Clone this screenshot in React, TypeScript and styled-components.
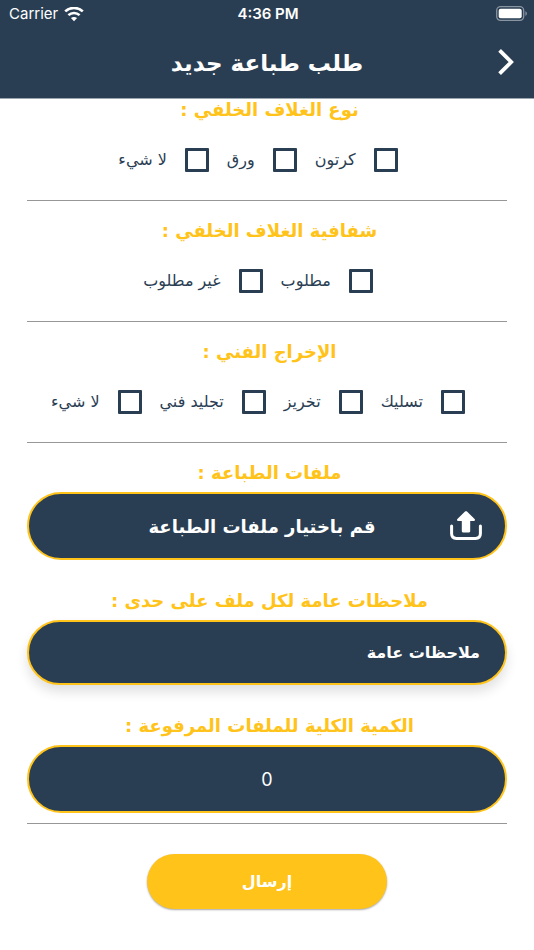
import React, { useState } from "react";
import styled, { createGlobalStyle } from "styled-components";

const navy = "#2a3e53";
const amber = "#ffc31a";
const arabic = `"DejaVu Sans", sans-serif`;
const latin = `Inter, "Liberation Sans", sans-serif`;

const GlobalStyle = createGlobalStyle`
  *, *::before, *::after { box-sizing: border-box; }
  body { margin: 0; background: #fff; font-family: ${arabic}; color: ${navy}; }
  button, input { font: inherit; color: inherit; }
`;

const Screen = styled.div`
  display: flex;
  flex-direction: column;
  min-height: 100vh;
`;

const Header = styled.header`
  background: ${navy};
  color: #fff;
  border-bottom: 1px solid #9aa5ad;
`;

const StatusBar = styled.div`
  display: grid;
  grid-template-columns: 1fr auto 1fr;
  align-items: center;
  height: 28px;
  padding: 0 7px 0 9px;
  font-family: ${latin};
  font-size: 15px;
  line-height: 28px;
`;

const Carrier = styled.span`
  display: flex;
  align-items: center;
  gap: 6px;
`;

const Clock = styled.time`
  font-weight: 600;
`;

const Battery = styled.svg`
  justify-self: end;
`;

const TitleBar = styled.div`
  display: grid;
  grid-template-columns: 56px 1fr 56px;
  align-items: center;
  height: 70px;
`;

const Title = styled.h1`
  margin: 0;
  font-size: 23px;
  font-weight: 700;
  line-height: 40px;
  text-align: center;
  white-space: nowrap;
`;

const BackButton = styled.button`
  display: grid;
  place-items: center;
  height: 44px;
  padding: 0;
  border: 0;
  background: none;
  cursor: pointer;
`;

const Form = styled.form`
  display: flex;
  flex-direction: column;
  padding: 1px 27px 40px;
`;

const Group = styled.fieldset<{ $first?: boolean }>`
  display: flex;
  flex-direction: column;
  gap: 28px;
  min-width: 0;
  margin: 0;
  padding: ${(p) => (p.$first ? 0 : 20)}px 0 28px;
  border: 0;
  border-bottom: 1px solid #979797;
`;

const Heading = styled.span`
  display: block;
  padding-inline-end: 5px;
  color: ${amber};
  font-size: 18px;
  font-weight: 700;
  line-height: 20px;
  text-align: center;
  white-space: nowrap;
`;

const Options = styled.div`
  display: flex;
  justify-content: center;
`;

const Option = styled.label`
  display: flex;
  align-items: center;
  gap: 18px;
  height: 24px;
  padding-inline-start: 18px;
  font-size: 16px;
  line-height: 24px;
  white-space: nowrap;
  cursor: pointer;
`;

const Tick = styled.input`
  appearance: none;
  flex: none;
  width: 24px;
  height: 24px;
  margin: 0;
  border: 3px solid ${navy};
  border-radius: 1px;
  background: #fff;
  &:checked {
    background: ${navy};
    box-shadow: inset 0 0 0 3px #fff;
  }
`;

const Fields = styled.div`
  display: flex;
  flex-direction: column;
  gap: 31px;
  padding: 20px 0 10px;
  border-bottom: 1px solid #979797;
`;

const Field = styled.div`
  display: flex;
  flex-direction: column;
  gap: 9px;
`;

const FilePicker = styled.button`
  display: grid;
  grid-template-columns: 32px 1fr 22px;
  align-items: center;
  height: 68px;
  padding: 0 23px;
  border: 2px solid ${amber};
  border-radius: 34px;
  background: ${navy};
  color: #fff;
  font-size: 18px;
  font-weight: 700;
  cursor: pointer;
`;

const TextBox = styled.input<{ $centered?: boolean }>`
  width: 100%;
  height: ${(p) => (p.$centered ? 68 : 65)}px;
  padding: 0 25px;
  border: 2px solid ${amber};
  border-radius: 34px;
  background: ${navy};
  color: #fff;
  font-family: ${(p) => (p.$centered ? latin : arabic)};
  font-size: ${(p) => (p.$centered ? 18 : 16)}px;
  font-weight: ${(p) => (p.$centered ? 400 : 700)};
  text-align: ${(p) => (p.$centered ? "center" : "start")};
  box-shadow: ${(p) => (p.$centered ? "none" : "0 7px 12px rgba(0, 0, 0, 0.12)")};
  &::placeholder {
    color: #fff;
    opacity: 1;
  }
`;

const Submit = styled.button`
  align-self: center;
  width: 50%;
  height: 55px;
  margin-top: 30px;
  border: 0;
  border-radius: 28px;
  background: ${amber};
  color: #fff;
  font-size: 16px;
  font-weight: 700;
  box-shadow: 0 1px 2px rgba(0, 0, 0, 0.35);
  cursor: pointer;
`;

const WifiIcon = () => (
  <svg width="20" height="15" viewBox="0 0 20 15" fill="none" stroke="#fff" strokeWidth="2.6" aria-hidden="true">
    <path d="M1.2 4.4C6.2-.2 13.8-.2 18.8 4.4" />
    <path d="M4.4 8.1c3.2-2.9 8-2.9 11.2 0" />
    <path d="M10 14.2 6.9 11.1c1.7-1.6 4.5-1.6 6.2 0z" fill="#fff" stroke="none" />
  </svg>
);

const BatteryIcon = () => (
  <Battery width="32" height="16" viewBox="0 0 32 16" aria-hidden="true">
    <rect x="1.7" y="0.7" width="27" height="13.6" rx="3.8" fill="none" stroke="#8995a1" strokeWidth="1.3" />
    <rect x="3.7" y="2.7" width="23" height="9.6" rx="2" fill="#fff" />
    <path d="M30.4 5.2c2 .8 2 3.8 0 4.6z" fill="#8995a1" />
  </Battery>
);

const ChevronIcon = () => (
  <svg width="16" height="28" viewBox="0 0 16 28" fill="none" stroke="#fff" strokeWidth="3.8" aria-hidden="true">
    <path d="M1.6 1.4 13.2 13 1.6 24.6" />
  </svg>
);

const UploadIcon = () => (
  <svg width="32" height="30" viewBox="0 0 32 30" fill="none" aria-hidden="true">
    <path
      d="M1.6 15v7.6c0 3 1.6 4.8 4.8 4.8h19.2c3.2 0 4.8-1.8 4.8-4.8V15"
      stroke="#fff"
      strokeWidth="3"
      strokeLinecap="round"
    />
    <path
      d="M15 .6 7.4 8.1c-.9.9-.4 2 .8 2h3.6v10c0 .8.4 1.3 1.2 1.3h6c.8 0 1.2-.5 1.2-1.3v-10h3.6c1.2 0 1.7-1.1.8-2L17 .6c-.6-.6-1.4-.6-2 0z"
      fill="#fff"
    />
  </svg>
);

interface OptionGroupProps {
  id: string;
  title: string;
  options: string[];
  first?: boolean;
}

function OptionGroup({ id, title, options, first }: OptionGroupProps) {
  return (
    <Group $first={first} aria-labelledby={id}>
      <Heading id={id}>{title}</Heading>
      <Options>
        {options.map((name) => (
          <Option key={name}>
            <Tick type="checkbox" name={id} value={name} />
            {name}
          </Option>
        ))}
      </Options>
    </Group>
  );
}

export default function App() {
  const [notes, setNotes] = useState("");
  const [quantity, setQuantity] = useState("0");

  return (
    <Screen>
      <GlobalStyle />
      <Header>
        <StatusBar>
          <Carrier>
            Carrier
            <WifiIcon />
          </Carrier>
          <Clock>4:36 PM</Clock>
          <BatteryIcon />
        </StatusBar>
        <TitleBar dir="rtl">
          <BackButton type="button" aria-label="رجوع">
            <ChevronIcon />
          </BackButton>
          <Title>طلب طباعة جديد</Title>
        </TitleBar>
      </Header>
      <Form dir="rtl" lang="ar" onSubmit={(e) => e.preventDefault()}>
        <OptionGroup first id="back-cover" title="نوع الغلاف الخلفي :" options={["كرتون", "ورق", "لا شيء"]} />
        <OptionGroup id="transparency" title="شفافية الغلاف الخلفي :" options={["مطلوب", "غير مطلوب"]} />
        <OptionGroup id="finishing" title="الإخراج الفني :" options={["تسليك", "تخريز", "تجليد فني", "لا شيء"]} />
        <Fields>
          <Field>
            <Heading as="label" htmlFor="files">ملفات الطباعة :</Heading>
            <FilePicker id="files" type="button">
              <UploadIcon />
              <span>قم باختيار ملفات الطباعة</span>
            </FilePicker>
          </Field>
          <Field>
            <Heading as="label" htmlFor="notes">ملاحظات عامة لكل ملف على حدى :</Heading>
            <TextBox
              id="notes"
              type="text"
              placeholder="ملاحظات عامة"
              value={notes}
              onChange={(e) => setNotes(e.target.value)}
            />
          </Field>
          <Field>
            <Heading as="label" htmlFor="quantity">الكمية الكلية للملفات المرفوعة :</Heading>
            <TextBox
              $centered
              id="quantity"
              type="text"
              inputMode="numeric"
              value={quantity}
              onChange={(e) => setQuantity(e.target.value)}
            />
          </Field>
        </Fields>
        <Submit type="submit">إرسال</Submit>
      </Form>
    </Screen>
  );
}
